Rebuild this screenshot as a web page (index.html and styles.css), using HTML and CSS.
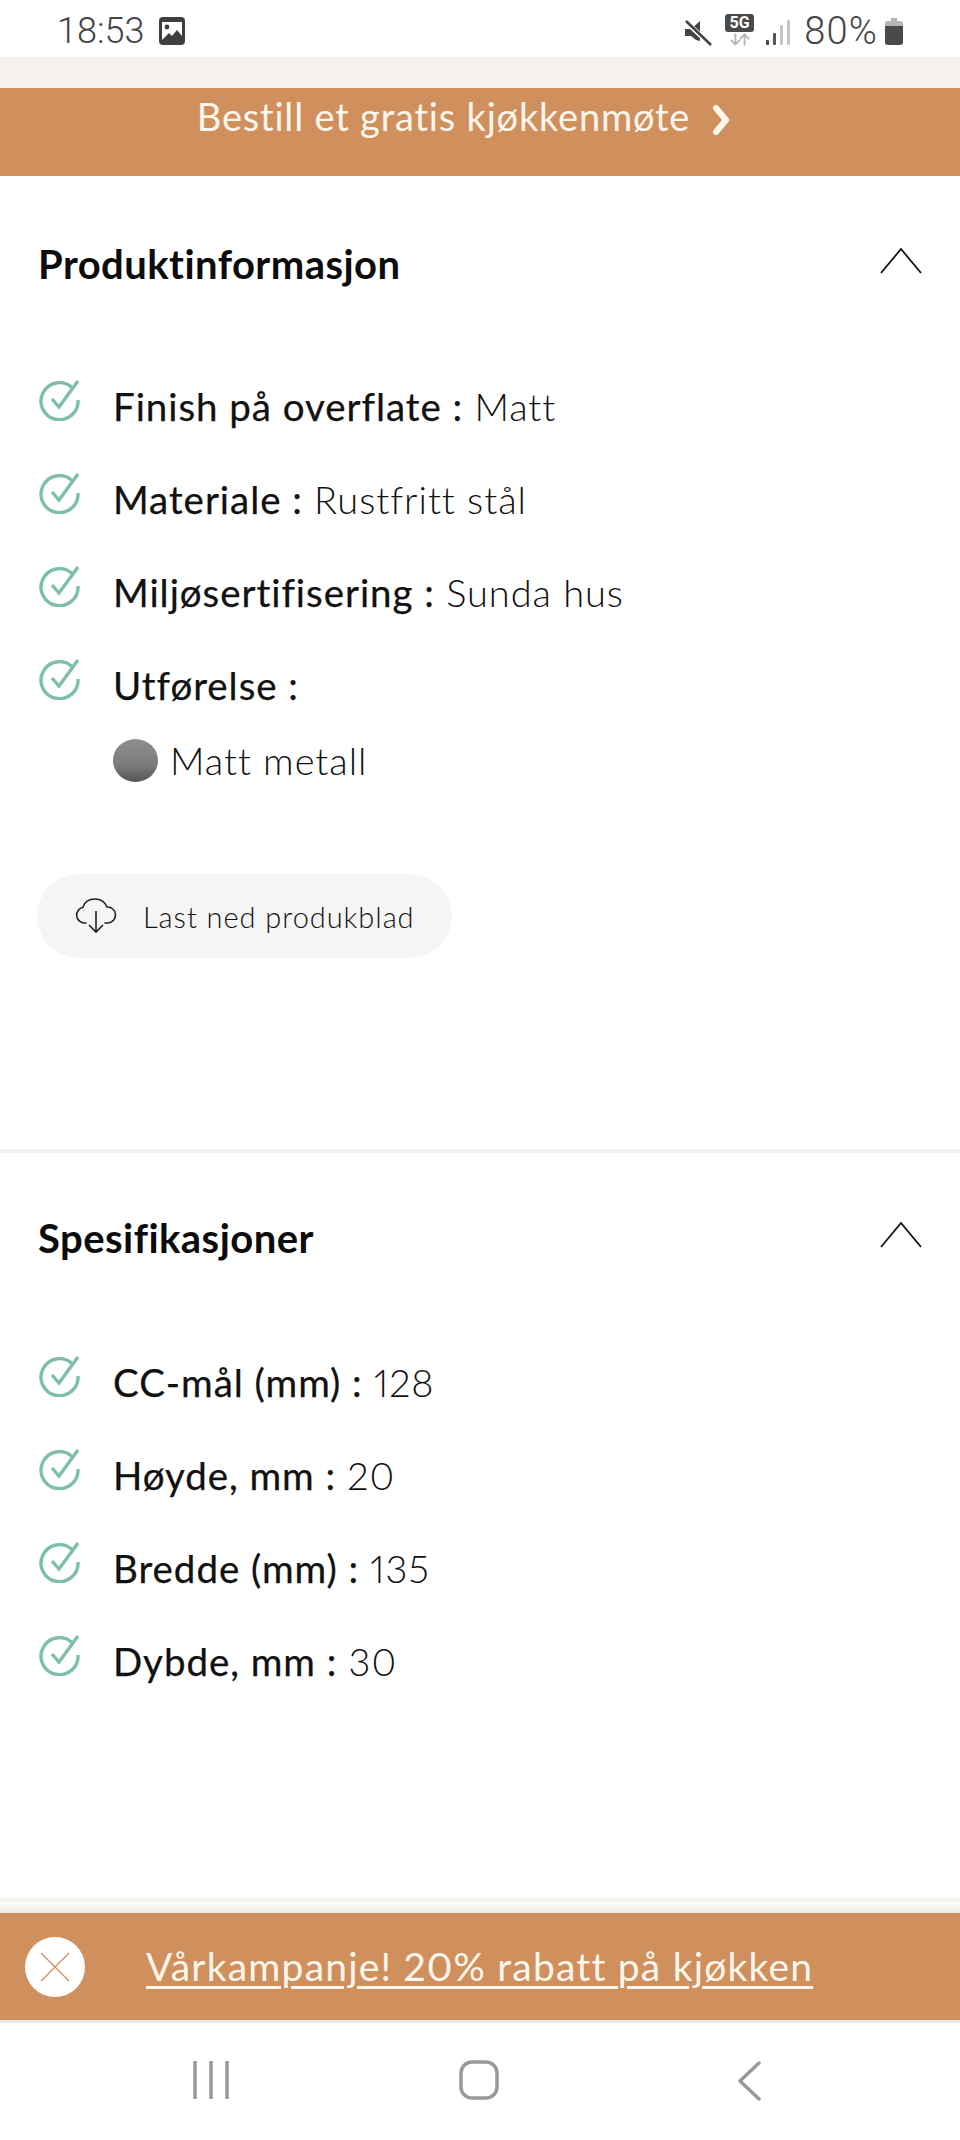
FILE: index.html
```html
<!DOCTYPE html>
<html lang="no">
<head>
<meta charset="utf-8">
<title>Produktinformasjon</title>
<link rel="stylesheet" href="styles.css">
</head>
<body>
<div class="page">
  <header class="status">
    <div class="status-left">
      <span class="time">18:53</span>
      <svg class="photo" viewBox="0 0 26 28"><rect width="26" height="28" rx="4" fill="#3f3f3f"/><rect x="3" y="5" width="20" height="18" fill="#fff"/><circle cx="8" cy="10" r="2.4" fill="#3f3f3f"/><path d="M3 23l7-7 3 3 5-6 5 6v4z" fill="#3f3f3f"/></svg>
    </div>
    <div class="status-right">
      <svg class="mute" viewBox="0 0 28 26"><path d="M1 9h6l9-8v20l-4-1-5-4H1z" fill="#444"/><path d="M2 2l25 23" stroke="#fff" stroke-width="5"/><path d="M2 1l25 24" stroke="#444" stroke-width="2.6"/></svg>
      <div class="net">
        <span class="badge">5G</span>
        <svg class="arrows" viewBox="0 0 24 13"><path d="M7 0v12M2 7l5 5 5-5M17 13V1M12 6l5-5 5 5" fill="none" stroke="#b4b4b4" stroke-width="2"/></svg>
      </div>
      <svg class="signal" viewBox="0 0 24 25"><rect x="0" y="20" width="3" height="5" rx="1" fill="#444"/><rect x="7" y="13" width="3" height="12" rx="1" fill="#555"/><rect x="14" y="5" width="3" height="20" rx="1" fill="#c4c4c4"/><rect x="21" y="0" width="3" height="25" rx="1" fill="#c4c4c4"/></svg>
      <span class="pct">80%</span>
      <svg class="batt" viewBox="0 0 18 27"><path d="M6 0h6v3h3a3 3 0 0 1 3 3v4H0V6a3 3 0 0 1 3-3h3z" fill="#b5b5b5"/><path d="M0 8h18v16a3 3 0 0 1-3 3H3a3 3 0 0 1-3-3z" fill="#4a4a4a"/></svg>
    </div>
  </header>
  <div class="cream"></div>
  <a class="cta"><span>Bestill et gratis kjøkkenmøte</span>
    <svg class="cta-chev" viewBox="0 0 20 30"><path d="M5 3l10 12L5 27" fill="none" stroke="#fdf6ec" stroke-width="6" stroke-linecap="round" stroke-linejoin="round"/></svg>
  </a>
  <main class="main">
    <section class="section first">
      <div class="head">
        <h2>Produktinformasjon</h2>
        <svg class="caret" viewBox="0 0 42 26"><path d="M1 25L21 1l20 24" fill="none" stroke="#111" stroke-width="1.800"/></svg>
      </div>
      <ul class="list">
        <li><svg class="check" viewBox="0 0 42 42"><path d="M33 8.500A18.500 18.500 0 1 0 39 21" fill="none" stroke="#7dbfa8" stroke-width="3.400"/><path d="M13 20l7 8L39 2" fill="none" stroke="#7dbfa8" stroke-width="3.400"/></svg><p><b>Finish på overflate :</b> Matt</p></li>
        <li><svg class="check" viewBox="0 0 42 42"><path d="M33 8.500A18.500 18.500 0 1 0 39 21" fill="none" stroke="#7dbfa8" stroke-width="3.400"/><path d="M13 20l7 8L39 2" fill="none" stroke="#7dbfa8" stroke-width="3.400"/></svg><p><b>Materiale :</b> Rustfritt stål</p></li>
        <li><svg class="check" viewBox="0 0 42 42"><path d="M33 8.500A18.500 18.500 0 1 0 39 21" fill="none" stroke="#7dbfa8" stroke-width="3.400"/><path d="M13 20l7 8L39 2" fill="none" stroke="#7dbfa8" stroke-width="3.400"/></svg><p><b>Miljøsertifisering :</b> Sunda hus</p></li>
        <li><svg class="check" viewBox="0 0 42 42"><path d="M33 8.500A18.500 18.500 0 1 0 39 21" fill="none" stroke="#7dbfa8" stroke-width="3.400"/><path d="M13 20l7 8L39 2" fill="none" stroke="#7dbfa8" stroke-width="3.400"/></svg><p><b>Utførelse :</b></p></li>
      </ul>
      <div class="swatch-row"><span class="swatch"></span><span>Matt metall</span></div>
      <a class="download">
        <svg class="cloud" viewBox="0 0 42 36"><path d="M11 25H9a8 8 0 0 1-1-15.800C9 4 14 1 20 1c6 0 10 3 12 8a8 8 0 0 1 1 16h-3" fill="none" stroke="#222" stroke-width="1.600" stroke-linecap="round"/><path d="M21 13v21M14 27l7 7 7-7" fill="none" stroke="#222" stroke-width="1.600"/></svg>
        <span>Last ned produkblad</span>
      </a>
    </section>
    <section class="section second">
      <div class="head">
        <h2>Spesifikasjoner</h2>
        <svg class="caret" viewBox="0 0 42 26"><path d="M1 25L21 1l20 24" fill="none" stroke="#111" stroke-width="1.800"/></svg>
      </div>
      <ul class="list">
        <li><svg class="check" viewBox="0 0 42 42"><path d="M33 8.500A18.500 18.500 0 1 0 39 21" fill="none" stroke="#7dbfa8" stroke-width="3.400"/><path d="M13 20l7 8L39 2" fill="none" stroke="#7dbfa8" stroke-width="3.400"/></svg><p><b>CC-mål (mm) :</b> 128</p></li>
        <li><svg class="check" viewBox="0 0 42 42"><path d="M33 8.500A18.500 18.500 0 1 0 39 21" fill="none" stroke="#7dbfa8" stroke-width="3.400"/><path d="M13 20l7 8L39 2" fill="none" stroke="#7dbfa8" stroke-width="3.400"/></svg><p><b>Høyde, mm :</b> 20</p></li>
        <li><svg class="check" viewBox="0 0 42 42"><path d="M33 8.500A18.500 18.500 0 1 0 39 21" fill="none" stroke="#7dbfa8" stroke-width="3.400"/><path d="M13 20l7 8L39 2" fill="none" stroke="#7dbfa8" stroke-width="3.400"/></svg><p><b>Bredde (mm) :</b> 135</p></li>
        <li><svg class="check" viewBox="0 0 42 42"><path d="M33 8.500A18.500 18.500 0 1 0 39 21" fill="none" stroke="#7dbfa8" stroke-width="3.400"/><path d="M13 20l7 8L39 2" fill="none" stroke="#7dbfa8" stroke-width="3.400"/></svg><p><b>Dybde, mm :</b> 30</p></li>
      </ul>
    </section>
  </main>
  <div class="stripe"></div>
  <div class="promo">
    <button class="close"><svg viewBox="0 0 30 30"><path d="M1 1l28 28M29 1L1 29" stroke="#d0905e" stroke-width="1.300" fill="none"/></svg></button>
    <a class="promo-link">Vårkampanje! 20% rabatt på kjøkken</a>
  </div>
  <nav class="nav">
    <svg class="nav-recent" viewBox="0 0 36 38"><path d="M2 1v36M18 1v36M34 1v36" stroke="#999" stroke-width="3.500" stroke-linecap="round"/></svg>
    <svg class="nav-home" viewBox="0 0 40 40"><rect x="2" y="2" width="36" height="36" rx="11" fill="none" stroke="#999" stroke-width="3.500"/></svg>
    <svg class="nav-back" viewBox="0 0 24 40"><path d="M22 2L3 20l19 18" fill="none" stroke="#999" stroke-width="3.500" stroke-linecap="round" stroke-linejoin="round"/></svg>
  </nav>
</div>
</body>
</html>
```

FILE: styles.css
```css
* { box-sizing: border-box; }
html, body { margin: 0; padding: 0; background: #fff; }
body { font-family: "Lato", "Liberation Sans", sans-serif; color: #111; font-variant-numeric: proportional-nums; }
.page { width: 960px; height: 2140px; display: flex; flex-direction: column; overflow: hidden; }

.status { height: 57px; flex: none; display: flex; justify-content: space-between; align-items: center; padding: 4px 57px 0 57px; }
.status-left { display: flex; align-items: center; gap: 15px; }
.time { font: 300 36px/1 "Roboto", sans-serif; color: #444; }
.photo { width: 26px; height: 28px; }
.status-right { display: flex; align-items: center; }
.mute { width: 28px; height: 26px; margin-right: 13px; margin-top: 4px; }
.net { width: 29px; display: flex; flex-direction: column; align-items: center; margin-right: 12px; margin-top: -1px; }
.badge { width: 29px; height: 18px; background: #4a4a4a; color: #fff; border-radius: 3px; font: 700 16px/18px "Roboto", sans-serif; text-align: center; }
.arrows { width: 22px; height: 13px; margin-top: 1px; }
.signal { width: 24px; height: 25px; margin-right: 14px; margin-top: 4px; }
.pct { font: 300 38px/1 "Roboto", sans-serif; color: #444; margin-right: 7px; letter-spacing: 1.2px; }
.batt { width: 18px; height: 27px; margin-top: 2px; }

.cream { height: 31px; flex: none; background: #f5f2ed; }
.cta { height: 88px; flex: none; background: #d0905e; color: #fdf6ec; display: flex; justify-content: center; align-items: flex-start; gap: 21px; padding: 5px 32px 0 0; font-size: 38px; line-height: 46px; font-weight: 400; letter-spacing: .8px; }
.cta-chev { width: 20px; height: 30px; margin-top: 12px; }

.main { flex: 1; display: flex; flex-direction: column; }
.section { padding: 0 38px; }
.section.first { height: 977px; border-bottom: 4px solid #f5f2ed; }
.head { display: flex; justify-content: space-between; align-items: flex-start; height: 60px; }
.first .head { margin-top: 58px; }
.second .head { margin-top: 55px; }
h2 { margin: 0; font-size: 40px; line-height: 60px; font-weight: 700; color: #0c0c0c; letter-spacing: .45px; }
.caret { width: 42px; height: 26px; margin-top: 14px; }

.list { list-style: none; padding: 0; display: flex; flex-direction: column; gap: 32px; }
.first .list { margin: 85px 0 0; }
.second .list { margin: 87px 0 0; }
.list li { display: flex; align-items: flex-start; height: 61px; }
.check { width: 42px; height: 42px; flex: none; margin: 0 32px 0 1px; }
.list p { margin: -3px 0 0; font-size: 38px; line-height: 61px; font-weight: 300; letter-spacing: .95px; color: #111; }
.list b { font-size: 38.500px; font-weight: 400; letter-spacing: .95px; -webkit-text-stroke: .25px #111; }

.swatch-row { display: flex; align-items: center; gap: 12px; margin: 19px 0 0 75px; font-size: 38px; line-height: 44px; font-weight: 300; letter-spacing: .95px; }
.swatch { width: 45px; height: 43px; border-radius: 50%; background: linear-gradient(#8e8e8e, #7c7c7c 60%, #555); flex: none; }

.download { display: flex; align-items: center; gap: 26px; width: 415px; height: 84px; margin: 92px 0 0 -1px; padding-left: 38px; border-radius: 42px; background: #f5f5f5; font-size: 29px; font-weight: 300; letter-spacing: .95px; color: #111; }
.cloud { width: 42px; height: 36px; flex: none; }

.stripe { height: 15px; flex: none; border-top: 4px solid #f6f3ee; background: linear-gradient(#fff, #ece9e4); }
.promo { height: 107px; flex: none; background: #d0905e; display: flex; align-items: center; padding-left: 25px; }
.close { width: 60px; height: 60px; border: 0; padding: 15px; border-radius: 50%; background: #fff; display: block; flex: none; }
.close svg { display: block; width: 30px; height: 30px; }
.promo-link { margin: -2px 0 0 61px; color: #fdf6ec; font-size: 39px; line-height: 46px; font-weight: 400; letter-spacing: 1.2px; text-decoration: underline; text-decoration-thickness: 3px; text-underline-offset: 5px; }
.nav { height: 120px; flex: none; border-top: 3px solid #ece9e4; display: flex; align-items: flex-start; padding: 38px 0 0 193px; }
.nav-recent { width: 36px; height: 38px; }
.nav-home { width: 40px; height: 40px; margin-left: 230px; margin-top: -1px; }
.nav-back { width: 24px; height: 40px; margin-left: 238px; }
```
